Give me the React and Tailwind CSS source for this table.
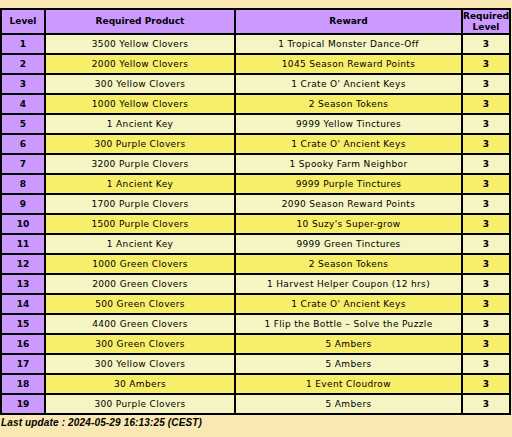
import React from "react";

const rows = [
    ["3500 Yellow Clovers", "1 Tropical Monster Dance-Off"],
    ["2000 Yellow Clovers", "1045 Season Reward Points"],
    ["300 Yellow Clovers", "1 Crate O' Ancient Keys"],
    ["1000 Yellow Clovers", "2 Season Tokens"],
    ["1 Ancient Key", "9999 Yellow Tinctures"],
    ["300 Purple Clovers", "1 Crate O' Ancient Keys"],
    ["3200 Purple Clovers", "1 Spooky Farm Neighbor"],
    ["1 Ancient Key", "9999 Purple Tinctures"],
    ["1700 Purple Clovers", "2090 Season Reward Points"],
    ["1500 Purple Clovers", "10 Suzy's Super-grow"],
    ["1 Ancient Key", "9999 Green Tinctures"],
    ["1000 Green Clovers", "2 Season Tokens"],
    ["2000 Green Clovers", "1 Harvest Helper Coupon (12 hrs)"],
    ["500 Green Clovers", "1 Crate O' Ancient Keys"],
    ["4400 Green Clovers", "1 Flip the Bottle – Solve the Puzzle"],
    ["300 Green Clovers", "5 Ambers"],
    ["300 Yellow Clovers", "5 Ambers"],
    ["30 Ambers", "1 Event Cloudrow"],
    ["300 Purple Clovers", "5 Ambers"],
];

export default function App() {
    return (
        <div
            className="min-h-screen bg-[#f9e8b4] pt-2 text-black"
            style={{ fontFamily: "'DejaVu Sans', sans-serif" }}
        >
            <div className="grid w-[511px] grid-cols-[42px_188px_225px_46px] gap-[2px] bg-black p-[2px] text-[9px] leading-[11px]">
                {/* Header */}
                <div className="flex h-[23px] items-center justify-center bg-[#cc99ff] font-bold">
                    Level
                </div>
                <div className="flex items-center justify-center bg-[#cc99ff] font-bold">
                    Required Product
                </div>
                <div className="flex items-center justify-center bg-[#cc99ff] font-bold">
                    Reward
                </div>
                <div className="flex flex-col items-center justify-center bg-[#cc99ff] text-center font-bold">
                    <span>Required</span>
                    <span>Level</span>
                </div>

                {/* Rows */}
                {rows.map(([product, reward], i) => {
                    const bg = i % 2 === 0 ? "bg-[#f5f5c4]" : "bg-[#f7ef6a]";
                    return (
                        <React.Fragment key={i}>
                            <div className="flex h-[18px] items-center justify-center bg-[#cc99ff] font-bold">
                                {i + 1}
                            </div>
                            <div className={`flex items-center justify-center tracking-[0.35px] ${bg}`}>
                                {product}
                            </div>
                            <div className={`flex items-center justify-center tracking-[0.35px] ${bg}`}>
                                {reward}
                            </div>
                            <div className={`flex items-center justify-center font-bold ${bg}`}>
                                3
                            </div>
                        </React.Fragment>
                    );
                })}
            </div>
            <p
                className="pl-px pt-[2px] text-[10px] font-bold italic leading-[12px] tracking-[0.15px]"
                style={{ fontFamily: "'Liberation Sans', Arial, sans-serif" }}
            >
                Last update : 2024-05-29 16:13:25 (CEST)
            </p>
        </div>
    );
}
